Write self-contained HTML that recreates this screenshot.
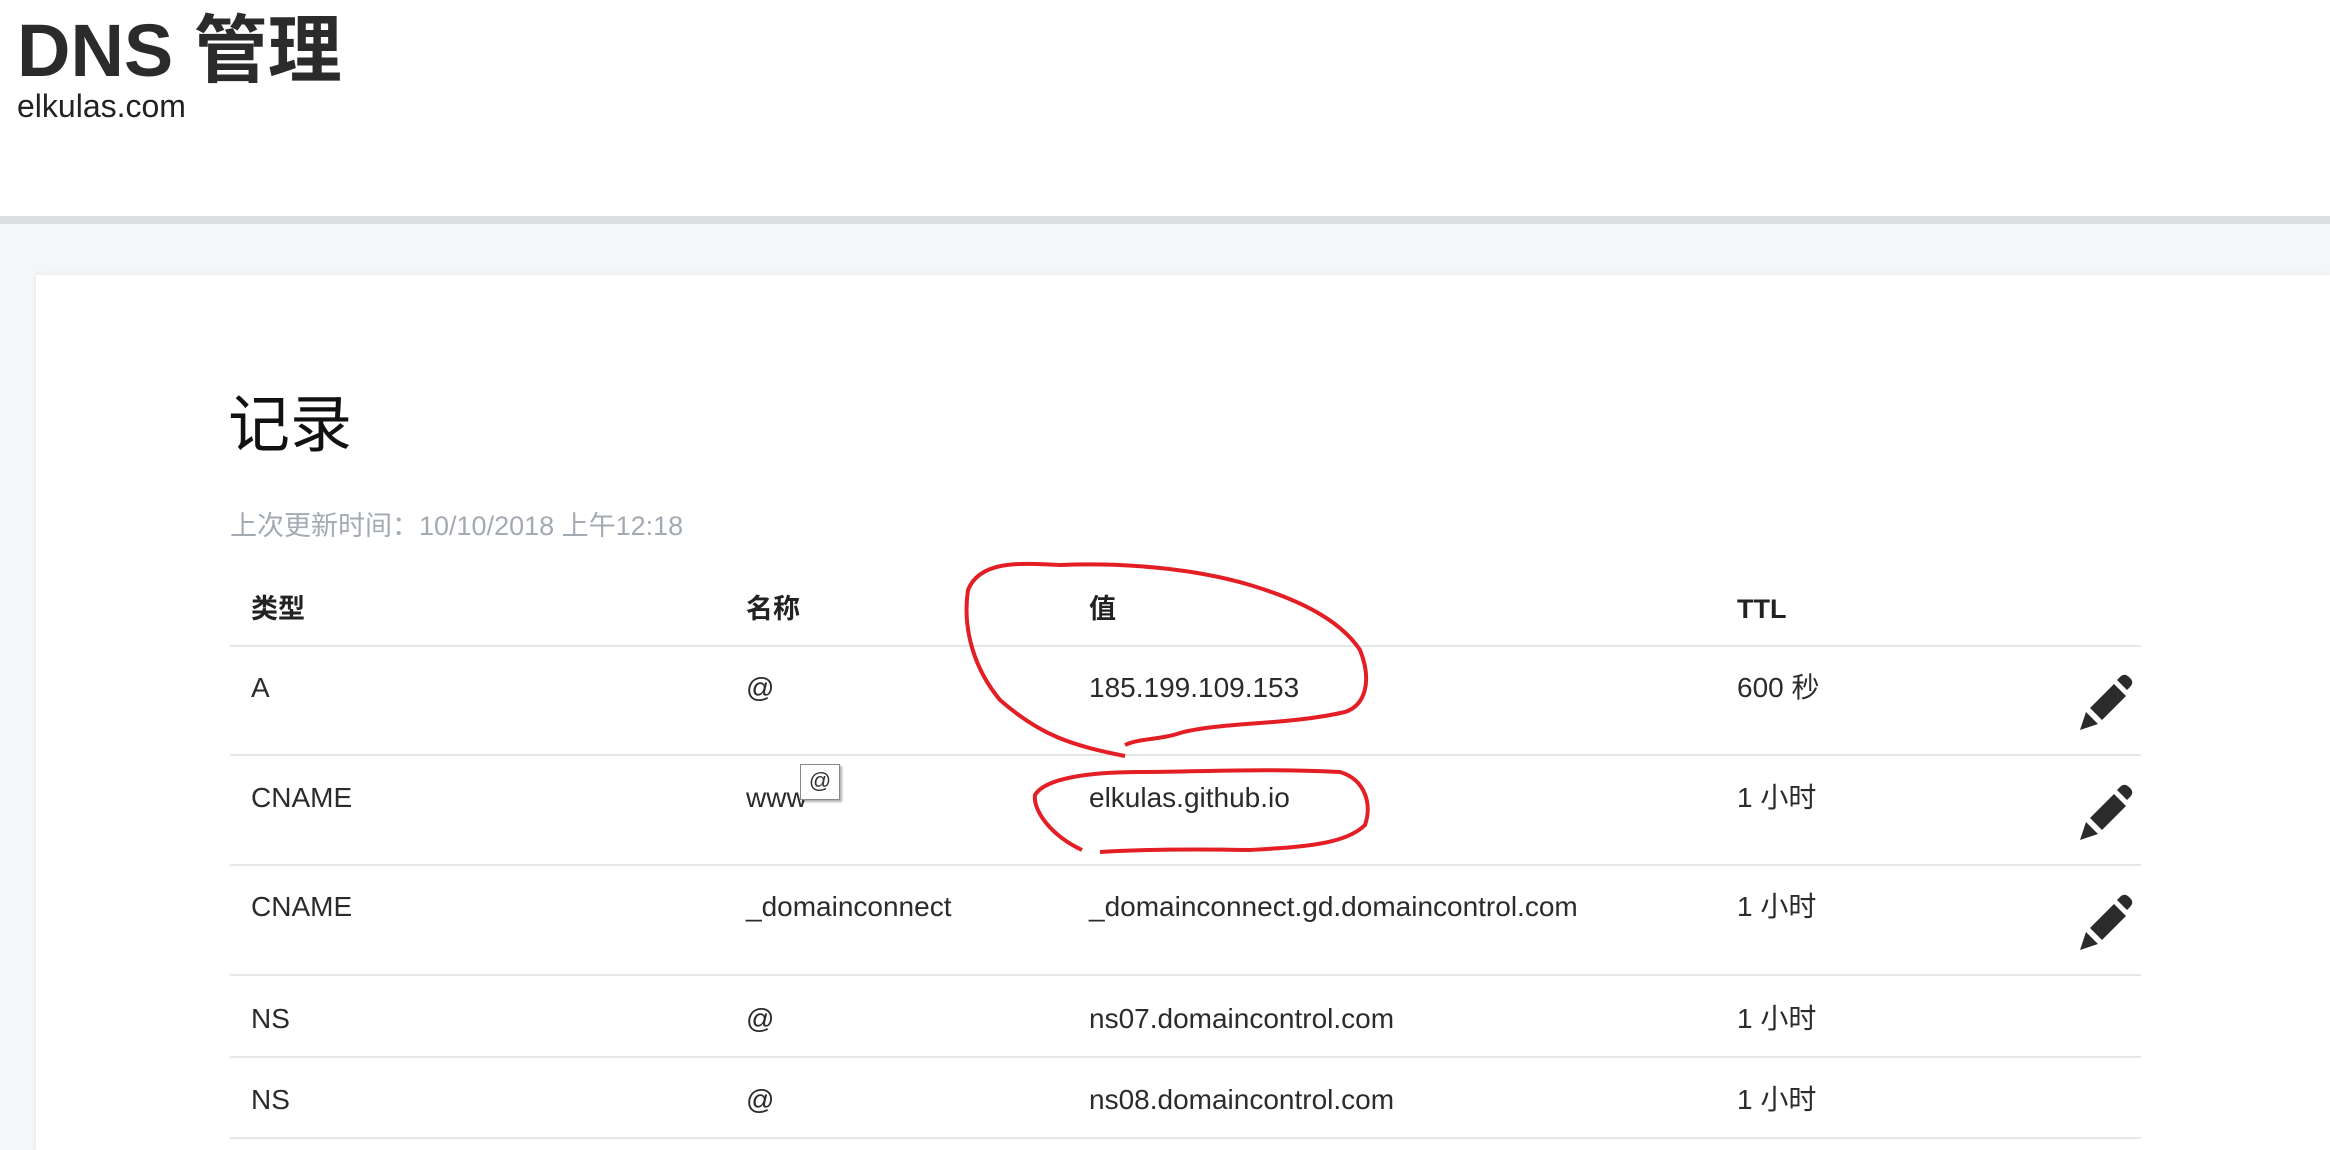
<!DOCTYPE html>
<html><head><meta charset="utf-8"><style>
*{margin:0;padding:0;box-sizing:border-box}
html,body{width:2330px;height:1150px;overflow:hidden}
body{background:#fff;font-family:"Liberation Sans","Noto Sans CJK SC",sans-serif;color:#2b2b2b;position:relative}
.abs{position:absolute;white-space:nowrap;line-height:1}
h1{position:absolute;left:17px;top:14px;font-size:74px;font-weight:bold;color:#2b2b2b;line-height:1}
.sub{left:17px;top:90px;font-size:32px;color:#222}
.bar{position:absolute;left:0;top:216px;width:2330px;height:8px;background:#dcdee0}
.bg{position:absolute;left:0;top:224px;width:2330px;height:926px;background:#f5f6f7}
.card{position:absolute;left:36px;top:275px;width:2294px;height:875px;background:#fff;box-shadow:0 0 6px rgba(0,0,0,.08)}
.t{font-size:28px;color:#2b2b2b}
.h{font-size:27px;font-weight:bold;color:#222}
.line{position:absolute;left:230px;width:1911px;height:2px;background:#e6e7e8}
</style></head><body>
<h1>DNS 管理</h1>
<div class="abs sub">elkulas.com</div>
<div class="bar"></div>
<div class="bg"></div>
<div class="card"></div>
<div class="abs" style="left:228px;top:395px;font-size:62px;color:#111">记录</div>
<div class="abs" style="left:230px;top:513px;font-size:27px;color:#a4aab2">上次更新时间：10/10/2018 上午12:18</div>

<div class="abs h" style="left:251px;top:596px">类型</div>
<div class="abs h" style="left:746px;top:596px">名称</div>
<div class="abs h" style="left:1089px;top:596px">值</div>
<div class="abs h" style="left:1737px;top:596px">TTL</div>
<div class="line" style="top:645px"></div>

<div class="abs t" style="left:251px;top:674px">A</div>
<div class="abs t" style="left:746px;top:674px">@</div>
<div class="abs t" style="left:1089px;top:674px">185.199.109.153</div>
<div class="abs t" style="left:1737px;top:674px">600 秒</div>
<div class="line" style="top:754px"></div>

<div class="abs t" style="left:251px;top:784px">CNAME</div>
<div class="abs t" style="left:746px;top:784px">www</div>
<div class="abs t" style="left:1089px;top:784px">elkulas.github.io</div>
<div class="abs t" style="left:1737px;top:784px">1 小时</div>
<div class="abs" style="left:800px;top:764px;width:40px;height:36px;background:#fff;border:1px solid #888;box-shadow:2px 2px 2px rgba(0,0,0,.3);font-size:22px;text-align:center;line-height:32px;color:#333">@</div>
<div class="line" style="top:864px"></div>

<div class="abs t" style="left:746px;top:893px">_domainconnect</div>
<div class="abs t" style="left:251px;top:893px">CNAME</div>
<div class="abs t" style="left:1089px;top:893px">_domainconnect.gd.domaincontrol.com</div>
<div class="abs t" style="left:1737px;top:893px">1 小时</div>
<div class="line" style="top:974px"></div>

<div class="abs t" style="left:251px;top:1005px">NS</div>
<div class="abs t" style="left:746px;top:1005px">@</div>
<div class="abs t" style="left:1089px;top:1005px">ns07.domaincontrol.com</div>
<div class="abs t" style="left:1737px;top:1005px">1 小时</div>
<div class="line" style="top:1056px"></div>

<div class="abs t" style="left:251px;top:1086px">NS</div>
<div class="abs t" style="left:746px;top:1086px">@</div>
<div class="abs t" style="left:1089px;top:1086px">ns08.domaincontrol.com</div>
<div class="abs t" style="left:1737px;top:1086px">1 小时</div>
<div class="line" style="top:1137px"></div>

<svg class="abs" style="left:0;top:0" width="2330" height="1150">
<defs><g id="p"><path d="M2080 730 L2086 712 L2098 724 Z" fill="#2b2b2b"/><path d="M2090 708 L2114 684 L2126 696 L2102 720 Z" fill="#2b2b2b"/><path d="M2117 680 L2121 676 Q2125 673 2129 677 L2131 679 Q2134 683 2130 687 L2127 690 Z" fill="#2b2b2b"/></g></defs>
<use href="#p"/><use href="#p" y="110"/><use href="#p" y="220"/>
<path d="M1125 756 C1070 745 1040 735 1000 700 C975 670 962 630 968 590 C980 560 1020 563 1060 565 C1130 562 1200 570 1250 585 C1300 600 1340 620 1360 650 C1372 680 1366 705 1345 712 C1290 725 1220 722 1180 733 C1160 740 1140 738 1125 745" fill="none" stroke="#e31e24" stroke-width="4"/>
<path d="M1082 850 C1050 835 1033 810 1035 795 C1045 778 1090 772 1140 772 C1200 772 1260 768 1340 772 C1366 780 1372 805 1365 825 C1345 845 1300 847 1250 850 C1200 849 1150 849 1100 852" fill="none" stroke="#e31e24" stroke-width="4"/>
</svg>
</body></html>
